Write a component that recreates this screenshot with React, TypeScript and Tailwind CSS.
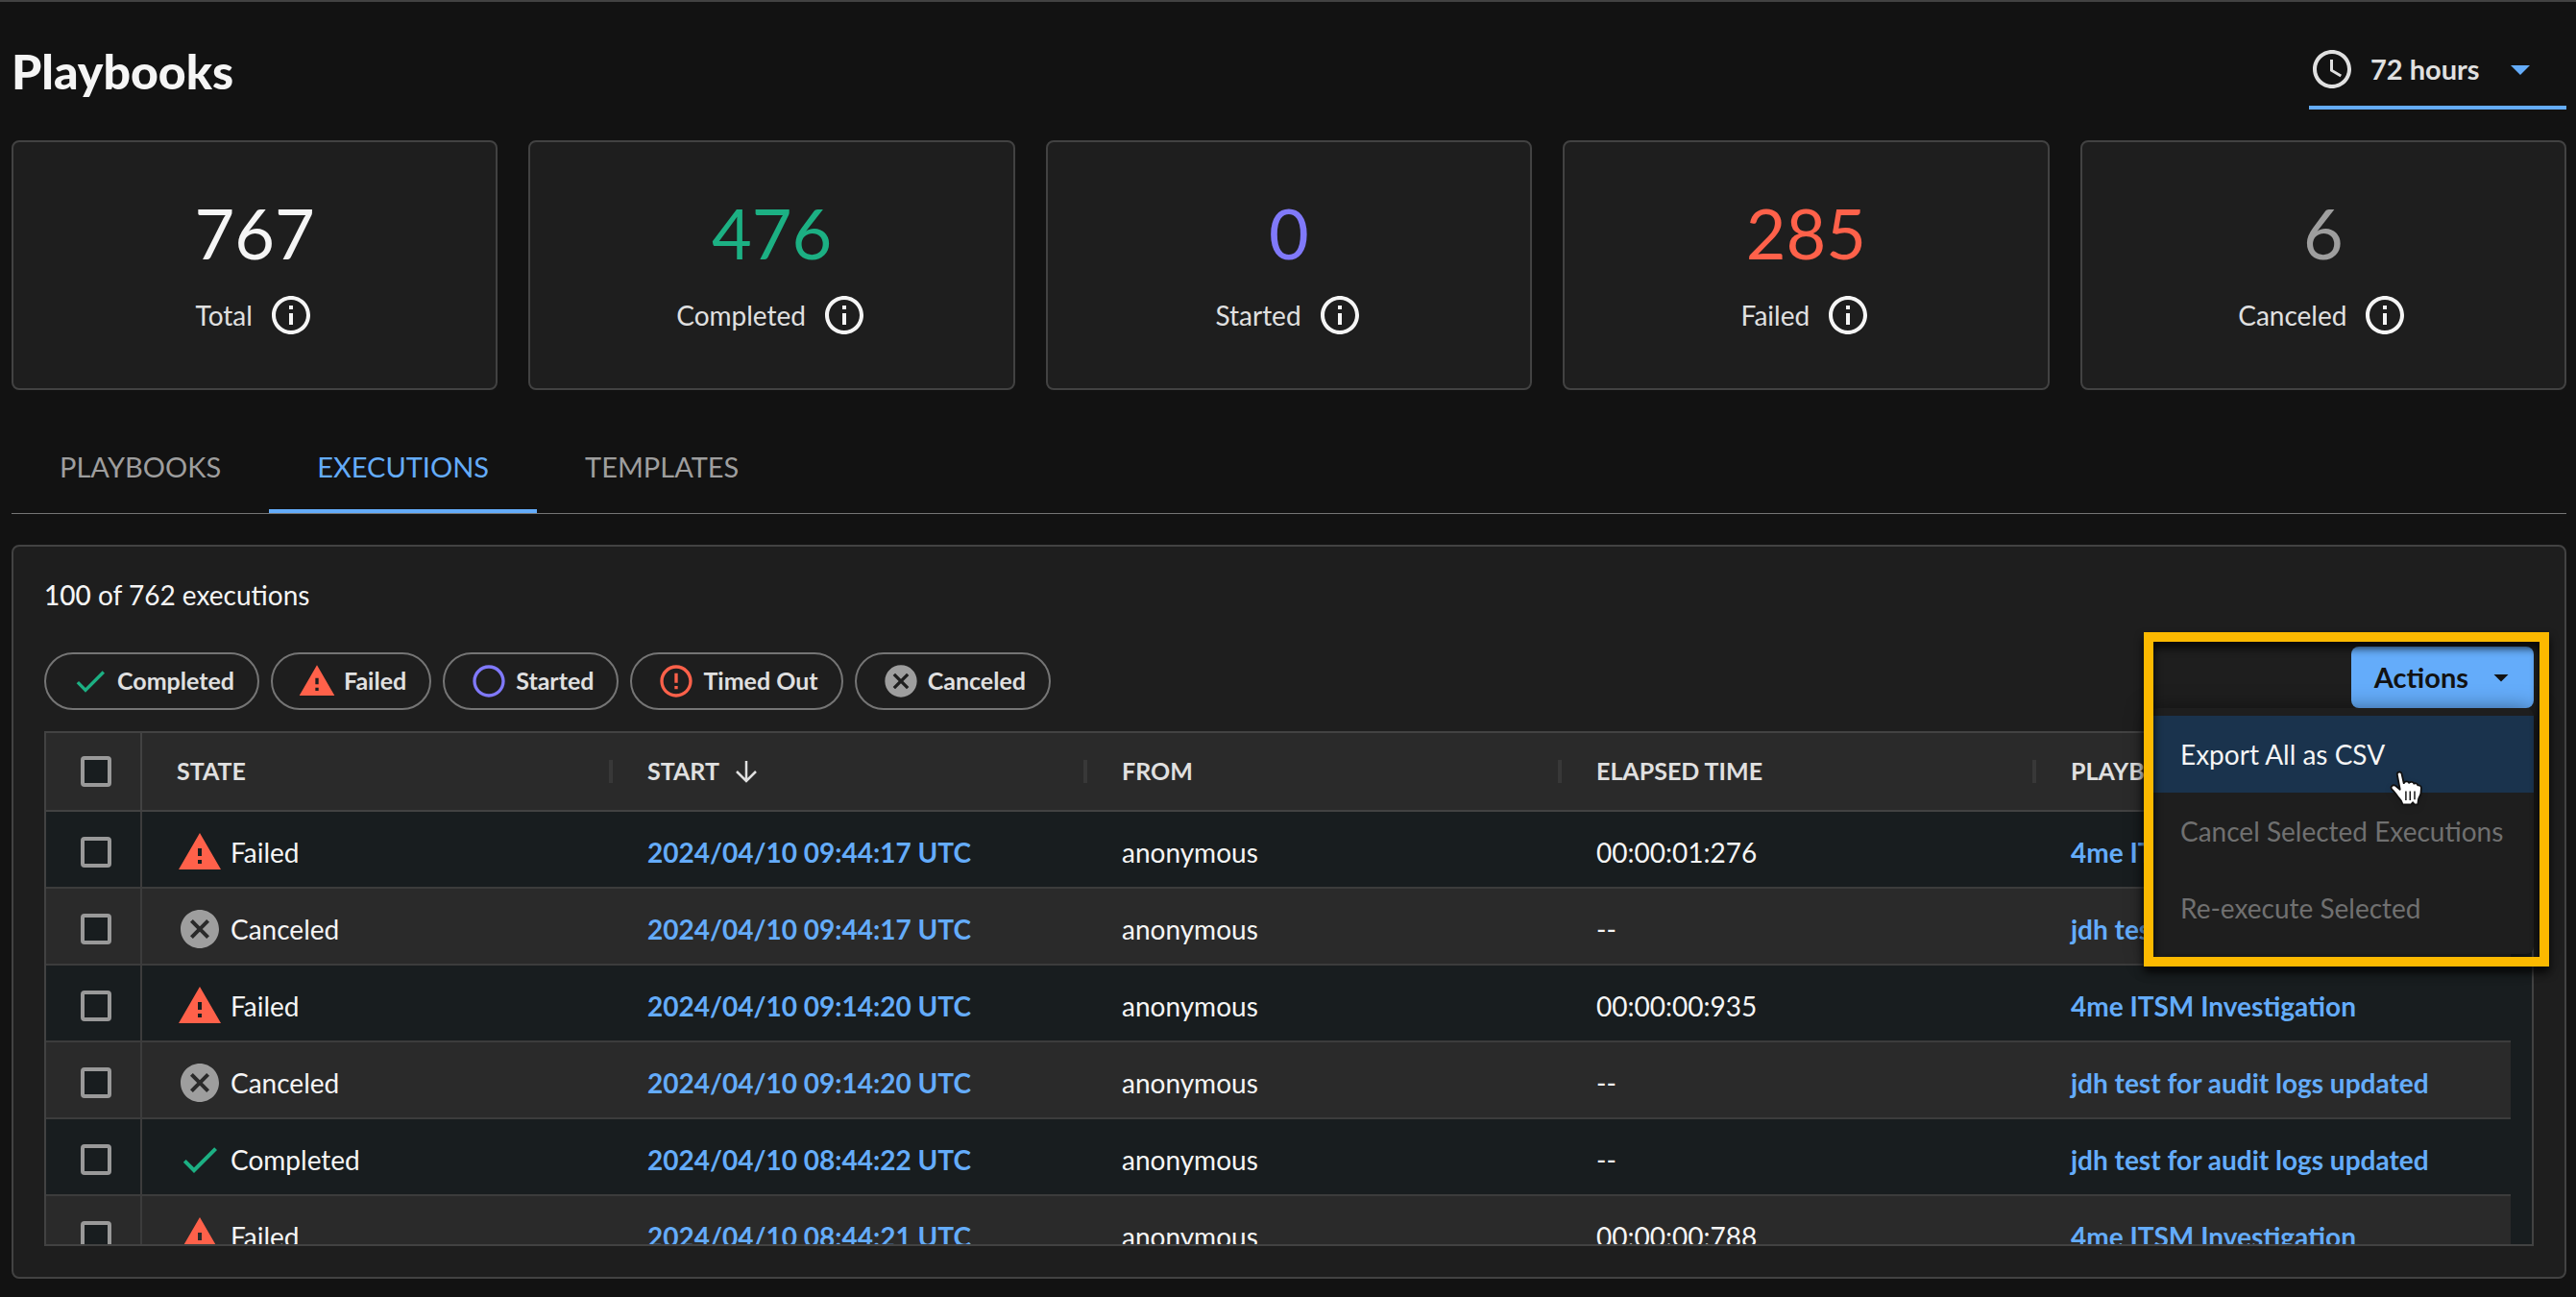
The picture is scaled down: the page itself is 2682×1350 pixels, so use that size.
import React from "react";
import {
  MdAccessTime,
  MdArrowDropDown,
  MdCancel,
  MdCheck,
  MdErrorOutline,
  MdInfoOutline,
  MdRadioButtonUnchecked,
  MdWarning,
} from "react-icons/md";

type State = "Completed" | "Failed" | "Started" | "Timed Out" | "Canceled";

const stats = [
  { label: "Total", value: 767, color: "text-[#f5f5f5]" },
  { label: "Completed", value: 476, color: "text-[#1cb083]" },
  { label: "Started", value: 0, color: "text-[#8079fa]" },
  { label: "Failed", value: 285, color: "text-[#ff614a]" },
  { label: "Canceled", value: 6, color: "text-[#9e9e9e]" },
];

const tabs = ["PLAYBOOKS", "EXECUTIONS", "TEMPLATES"];

const filters: State[] = ["Completed", "Failed", "Started", "Timed Out", "Canceled"];

const rows: { state: State; start: string; elapsed: string; playbook: string }[] = [
  { state: "Failed", start: "2024/04/10 09:44:17 UTC", elapsed: "00:00:01:276", playbook: "4me ITSM Investigation" },
  { state: "Canceled", start: "2024/04/10 09:44:17 UTC", elapsed: "--", playbook: "jdh test for audit logs updated" },
  { state: "Failed", start: "2024/04/10 09:14:20 UTC", elapsed: "00:00:00:935", playbook: "4me ITSM Investigation" },
  { state: "Canceled", start: "2024/04/10 09:14:20 UTC", elapsed: "--", playbook: "jdh test for audit logs updated" },
  { state: "Completed", start: "2024/04/10 08:44:22 UTC", elapsed: "--", playbook: "jdh test for audit logs updated" },
  { state: "Failed", start: "2024/04/10 08:44:21 UTC", elapsed: "00:00:00:788", playbook: "4me ITSM Investigation" },
];

const stateIcons: Record<State, { Icon: typeof MdCheck; color: string }> = {
  Completed: { Icon: MdCheck, color: "text-[#1cb083]" },
  Failed: { Icon: MdWarning, color: "text-[#ff614a]" },
  Started: { Icon: MdRadioButtonUnchecked, color: "text-[#8079fa]" },
  "Timed Out": { Icon: MdErrorOutline, color: "text-[#ff614a]" },
  Canceled: { Icon: MdCancel, color: "text-[#9e9e9e]" },
};

function StateIcon({ state, size }: { state: State; size: "size-10" | "size-12" }) {
  const { Icon, color } = stateIcons[state];
  return <Icon className={`${size} ${color} shrink-0`} aria-hidden />;
}

function SortDown() {
  return (
    <svg viewBox="0 0 24 24" className="size-6" fill="none" stroke="currentColor" strokeWidth="2.5" aria-hidden>
      <path d="M12 1v20M2 12l10 10 10-10" />
    </svg>
  );
}

function HandCursor() {
  return (
    <svg
      viewBox="0 0 110 110"
      className="pointer-events-none absolute top-14 right-28 size-10 drop-shadow-md"
      aria-hidden
    >
      <path
        d="M27 14c-1-8 11-10 13-2l6 27c4-7 13-6 15-1 4-4 12-3 14 2 5-2 10 0 11 5 5-1 10 2 10 8l-1 14c-1 8-6 12-7 18l-2 15H76l-4-6-5 6H43c-2-8-6-14-12-20-6-7-10-15-19-23-6-8 2-15 10-11l13 11z"
        fill="#fff"
        stroke="#111"
        strokeWidth="5"
        strokeLinejoin="round"
      />
      <path d="M52 62v26M64 62v26M77 62v24" stroke="#111" strokeWidth="4" />
    </svg>
  );
}

function Checkbox({ label }: { label: string }) {
  return (
    <input
      type="checkbox"
      aria-label={label}
      className="block size-8 appearance-none rounded border-4 border-[#999] bg-[#181d1f] checked:bg-[#64acfa]"
    />
  );
}

function Header() {
  return (
    <header className="flex items-center justify-between pt-8">
      <h1 className="text-[50px] leading-15 font-black text-[#f5f5f5]">Playbooks</h1>
      <div className="flex h-20 w-[268px] items-center border-b-4 border-[#64acfa] text-[#e0e0e0]">
        <MdAccessTime className="mr-4 size-12 shrink-0" aria-hidden />
        <select
          aria-label="Time range"
          className="min-w-0 flex-1 appearance-none bg-transparent text-[29px] font-bold"
          defaultValue="72 hours"
        >
          <option>24 hours</option>
          <option>72 hours</option>
        </select>
        <MdArrowDropDown className="mr-6 size-12 shrink-0 text-[#64acfa]" aria-hidden />
      </div>
    </header>
  );
}

function Stats() {
  return (
    <section className="mt-8 grid grid-cols-5 gap-8">
      {stats.map((s) => (
        <div
          key={s.label}
          className="flex h-65 flex-col items-center rounded-lg border-2 border-[#424242] bg-[#1e1e1e] pt-[54px]"
        >
          <div className={`text-[72px] leading-20 ${s.color}`}>{s.value}</div>
          <div className="mt-[22px] flex items-center gap-4 text-[28px] text-[#e0e0e0]">
            {s.label}
            <button type="button" aria-label={`About ${s.label}`}>
              <MdInfoOutline className="size-12 text-[#f5f5f5]" />
            </button>
          </div>
        </div>
      ))}
    </section>
  );
}

function Tabs() {
  return (
    <div role="tablist" className="mt-9 flex border-b border-[#757575]">
      {tabs.map((t) => {
        const active = t === "EXECUTIONS";
        return (
          <button
            key={t}
            type="button"
            role="tab"
            aria-selected={active}
            className={`h-23 border-b-4 px-[50px] text-[29px] ${
              active ? "border-[#64acfa] text-[#64acfa]" : "border-transparent text-[#9e9e9e]"
            }`}
          >
            {t}
          </button>
        );
      })}
    </div>
  );
}

function ActionsMenu() {
  return (
    <div className="relative z-10">
      <button
        type="button"
        aria-haspopup="menu"
        aria-expanded="true"
        className="flex h-16 items-center gap-4 rounded-lg bg-[#64acfa] pr-4 pl-6 text-[29px] font-bold text-[#121212]"
      >
        Actions
        <MdArrowDropDown className="size-9" aria-hidden />
      </button>
      <div
        role="menu"
        className="absolute top-full right-0 w-100 rounded-lg bg-[#1e1e1e] py-2 text-[28px] text-[#707070] shadow-[0_4px_24px_rgba(0,0,0,0.6)]"
      >
        <button type="button" role="menuitem" className="relative block h-20 w-full bg-[#1a334d] px-8 text-left text-[#f5f5f5]">
          Export All as CSV
          <HandCursor />
        </button>
        <button type="button" role="menuitem" disabled className="block h-20 w-full px-8 text-left whitespace-nowrap">
          Cancel Selected Executions
        </button>
        <button type="button" role="menuitem" disabled className="block h-20 w-full px-8 text-left">
          Re-execute Selected
        </button>
      </div>
      <div className="pointer-events-none absolute -top-[15px] -right-4 h-[348px] w-[422px] border-10 border-[#fcb900] drop-shadow-[0_6px_5px_rgba(0,0,0,0.85)]" />
    </div>
  );
}

function HeadCell({ children }: { children: React.ReactNode }) {
  return (
    <th className="p-0 text-left font-bold">
      <div className="flex items-center justify-between pl-9">
        <span className="flex items-center gap-4">{children}</span>
        <span className="h-6 w-1 bg-[#383838]" />
      </div>
    </th>
  );
}

function Executions() {
  return (
    <div className="min-h-0 flex-1 overflow-hidden border-2 border-[#424242] bg-[#181d1f] pr-[22px]">
      <table className="w-full table-fixed border-separate border-spacing-0 text-[28px] text-[#f5f5f5]">
        <colgroup>
          <col className="w-[100px]" />
          <col className="w-[490px]" />
          <col />
          <col />
          <col />
          <col />
        </colgroup>
        <thead>
          <tr className="h-[82px] bg-[#2a2a2a] text-[25px] text-[#e0e0e0] *:border-b-2 *:border-[#424242]">
            <th className="border-r-2 p-0 pl-9">
              <Checkbox label="Select all executions" />
            </th>
            <HeadCell>STATE</HeadCell>
            <HeadCell>
              START <SortDown />
            </HeadCell>
            <HeadCell>FROM</HeadCell>
            <HeadCell>ELAPSED TIME</HeadCell>
            <HeadCell>PLAYBOOK</HeadCell>
          </tr>
        </thead>
        <tbody>
          {rows.map((r, i) => (
            <tr
              key={i}
              className="h-20 *:border-b-2 *:border-[#3c3c3c] *:p-0 *:pt-1.5 *:pl-9 even:bg-[#2a2a2a]"
            >
              <td className="border-r-2">
                <Checkbox label={`Select execution ${i + 1}`} />
              </td>
              <td>
                <span className="flex items-center gap-2">
                  <StateIcon state={r.state} size="size-12" />
                  {r.state}
                </span>
              </td>
              <td>
                <a href="#start" className="font-bold text-[#64acfa]">
                  {r.start}
                </a>
              </td>
              <td>anonymous</td>
              <td>{r.elapsed}</td>
              <td>
                <a href="#playbook" className="font-bold text-[#64acfa]">
                  {r.playbook}
                </a>
              </td>
            </tr>
          ))}
        </tbody>
      </table>
    </div>
  );
}

export default function App() {
  return (
    <main className="flex h-screen flex-col border-t-2 border-[#424242] bg-[#121212] pr-2.5 pb-[19px] pl-3 font-['Lato',sans-serif]">
      <Header />
      <Stats />
      <Tabs />
      <section className="mt-8 flex min-h-0 flex-1 flex-col rounded-lg border-2 border-[#424242] bg-[#1e1e1e] px-8 pt-[30px] pb-8">
        <p className="text-[28px] leading-10 text-[#f5f5f5]">
          <span className="font-medium">100</span> of 762 executions
        </p>
        <div className="mt-[34px] mb-[22px] flex items-start justify-between">
          <div className="flex gap-3 pt-1.5">
            {filters.map((f) => (
              <button
                key={f}
                type="button"
                className="flex h-15 items-center gap-2 rounded-full border-2 border-[#757575] pr-6 pl-[26px] text-[25px] font-bold text-[#e0e0e0]"
              >
                <StateIcon state={f} size="size-10" />
                {f}
              </button>
            ))}
          </div>
          <ActionsMenu />
        </div>
        <Executions />
      </section>
    </main>
  );
}
